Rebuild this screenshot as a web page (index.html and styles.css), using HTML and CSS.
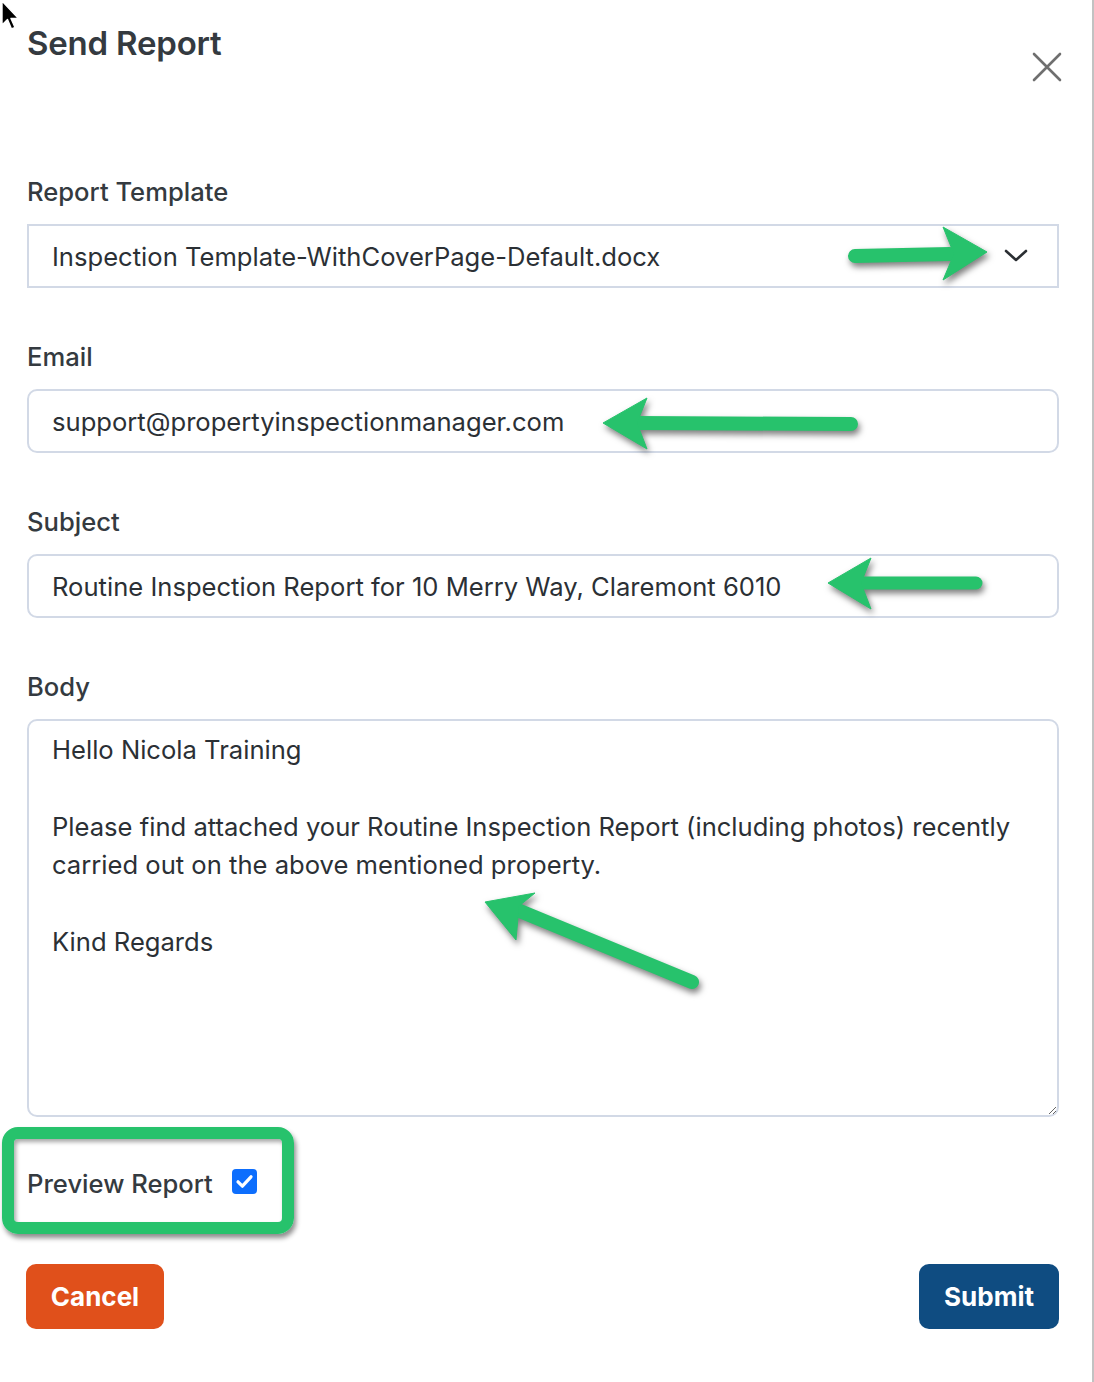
FILE: index.html
```html
<!DOCTYPE html>
<html lang="en">
<head>
<meta charset="utf-8">
<title>Send Report</title>
<link rel="stylesheet" href="styles.css">
</head>
<body>
<div class="page">
  <header class="header">
    <h1 class="title">Send Report</h1>
    <button class="close" aria-label="Close">
      <svg width="30" height="30" viewBox="0 0 30 30"><path d="M2 2 L28 28 M28 2 L2 28" stroke="#6f6f6f" stroke-width="2.6" stroke-linecap="round" fill="none"/></svg>
    </button>
  </header>

  <form class="form">
    <div class="group">
      <label class="label">Report Template</label>
      <div class="select">
        <span>Inspection Template-WithCoverPage-Default.docx</span>
        <svg class="chev" width="24" height="14" viewBox="0 0 24 14"><path d="M2 2 L12 11 L22 2" stroke="#2b2f33" stroke-width="2.6" fill="none" stroke-linecap="round" stroke-linejoin="round"/></svg>
      </div>
    </div>
    <div class="group">
      <label class="label">Email</label>
      <input class="input" type="text" value="support@propertyinspectionmanager.com">
    </div>
    <div class="group">
      <label class="label">Subject</label>
      <input class="input" type="text" value="Routine Inspection Report for 10 Merry Way, Claremont 6010">
    </div>
    <div class="group group-body">
      <label class="label">Body</label>
      <textarea class="textarea">Hello Nicola Training

Please find attached your Routine Inspection Report (including photos) recently carried out on the above mentioned property.

Kind Regards</textarea>
    </div>

    <div class="preview">
      <span class="preview-label">Preview Report</span>
      <span class="checkbox"><svg width="25" height="25" viewBox="0 0 25 25"><path d="M6 12.8 L10.4 17.2 L19 7.8" stroke="#fff" stroke-width="3.2" fill="none" stroke-linecap="round" stroke-linejoin="round"/></svg></span>
      <span class="highlight"></span>
    </div>

    <div class="actions">
      <button type="button" class="btn btn-cancel">Cancel</button>
      <button type="button" class="btn btn-submit">Submit</button>
    </div>
  </form>

  <svg class="annotations" width="1094" height="1382" viewBox="0 0 1094 1382">
    <g fill="#27c26c" stroke="#27c26c" class="arrows">
      <line x1="855" y1="256" x2="950" y2="254" stroke-width="14" stroke-linecap="round"/>
      <polygon points="943,227 987,252 943,280 954,254" stroke-width="1"/>
      <line x1="636" y1="423" x2="851" y2="424" stroke-width="14" stroke-linecap="round"/>
      <polygon points="603,423 647,398 637,423 647,449" stroke-width="1"/>
      <line x1="860" y1="583" x2="976" y2="583" stroke-width="13" stroke-linecap="round"/>
      <polygon points="828,583 871,558 861,583 871,609" stroke-width="1"/>
      <line x1="515" y1="909" x2="692" y2="982" stroke-width="14" stroke-linecap="round"/>
      <polygon points="485,902 535,893 519,906 516,940" stroke-width="1"/>
    </g>
  </svg>

  <svg class="cursor" width="22" height="34" viewBox="0 0 22 34">
    <path d="M1 0 L1 24 L6.5 18.5 L10.5 28 L14 26.5 L10 17.5 L17.5 17.5 Z" fill="#000" stroke="#fff" stroke-width="1.4" stroke-linejoin="round"/>
  </svg>
</div>
</body>
</html>
```

FILE: styles.css
```css
* { box-sizing: border-box; }

html, body {
  margin: 0;
  padding: 0;
  background: #fff;
}

body {
  font-family: Inter, "Noto Sans", "Liberation Sans", sans-serif;
  color: #343a40;
}

.page {
  position: relative;
  width: 1094px;
  height: 1382px;
  border-right: 2px solid #c2c2c2;
  padding: 0 33px 0 27px;
  overflow: hidden;
}

.header {
  display: flex;
  justify-content: space-between;
  align-items: flex-start;
  padding-top: 23px;
}

.title {
  margin: 0;
  font-size: 33px;
  line-height: 40px;
  font-weight: 600;
  color: #343a40;
  letter-spacing: -0.2px;
}

.close {
  margin-top: 29px;
  margin-right: -3px;
  width: 30px;
  height: 30px;
  padding: 0;
  border: 0;
  background: none;
  display: flex;
}

.form {
  display: flex;
  flex-direction: column;
  padding-top: 92px;
}

.group {
  display: flex;
  flex-direction: column;
  gap: 14px;
  margin-bottom: 51px;
}

.group-body { margin-bottom: 49px; }

.label {
  font-size: 25.6px;
  line-height: 36px;
  font-weight: 500;
  color: #343a40;
}

.select,
.input,
.textarea {
  width: 100%;
  border: 2px solid #d2d9e6;
  background: #fff;
  font-family: Inter, "Noto Sans", "Liberation Sans", sans-serif;
  font-size: 25.6px;
  color: #2b3035;
}

.select {
  height: 64px;
  display: flex;
  align-items: center;
  justify-content: space-between;
  padding: 0 29px 0 23px;
}

.chev { display: block; }

.input {
  height: 64px;
  border-radius: 10px;
  padding: 0 23px;
  outline: none;
}

.textarea {
  height: 398px;
  border-radius: 10px;
  padding: 10px 23px;
  line-height: 38.4px;
  resize: vertical;
  outline: none;
  display: block;
}

.preview {
  position: relative;
  display: flex;
  align-items: center;
  gap: 19px;
  height: 36px;
}

.preview-label {
  font-size: 25.6px;
  line-height: 36px;
  font-weight: 500;
  color: #343a40;
}

.checkbox {
  width: 25px;
  height: 25px;
  border-radius: 4px;
  background: #0d6efd;
  display: flex;
  margin-top: -6px;
}

.highlight {
  position: absolute;
  left: -25px;
  top: -39px;
  width: 292px;
  height: 107px;
  border: 12px solid #27c26c;
  border-radius: 16px;
  box-shadow: 2px 4px 5px rgba(0, 0, 0, 0.45), inset 2px 3px 4px rgba(0, 0, 0, 0.35);
  pointer-events: none;
}

.actions {
  display: flex;
  justify-content: space-between;
  margin-top: 62px;
}

.btn {
  height: 65px;
  border: 0;
  border-radius: 10px;
  font-family: Inter, "Noto Sans", "Liberation Sans", sans-serif;
  font-size: 26px;
  font-weight: 700;
  color: #fff;
  padding: 0 24px;
}

.btn-cancel {
  background: #e0501b;
  width: 138px;
  margin-left: -1px;
}

.btn-submit {
  background: #0f4c81;
  width: 140px;
}

.annotations {
  position: absolute;
  left: 0;
  top: 0;
  pointer-events: none;
}

.arrows {
  filter: drop-shadow(2px 4px 3px rgba(0, 0, 0, 0.5));
}

.cursor {
  position: absolute;
  left: 1px;
  top: 1px;
}
```
